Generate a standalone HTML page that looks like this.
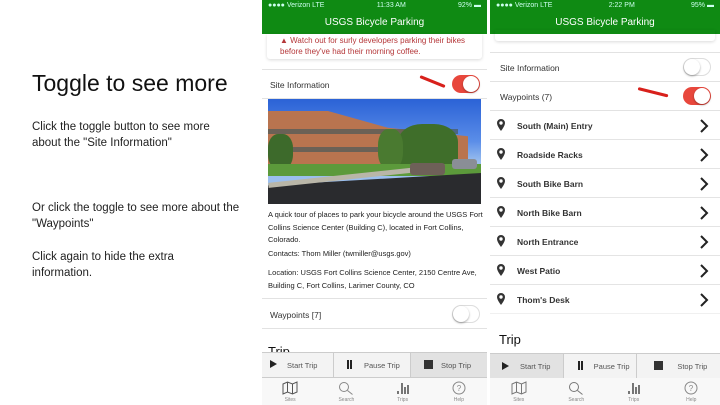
<!DOCTYPE html>
<html><head><style>
*{margin:0;padding:0;box-sizing:border-box}
body{width:720px;height:405px;background:#fff;position:relative;overflow:hidden;font-family:"Liberation Sans",sans-serif;color:#222}
.a{position:absolute}
.hdr{background:#0f8a13;color:#fff;height:34px}
.hdr .st{font-size:7px;color:#cfe;position:absolute;top:2px;left:6px;right:6px;display:flex;justify-content:space-between}
.hdr .t{position:absolute;top:17px;width:100%;text-align:center;font-size:10px}
.sep{position:absolute;height:1px;background:#e2e2e2}
.tg{position:absolute;width:28px;height:18px;border-radius:9px}
.tg.on{background:#e8473c}
.tg.off{background:#fff;border:1px solid #ddd}
.tg i{position:absolute;top:1px;width:16px;height:16px;border-radius:50%;background:#fff;box-shadow:0 1px 2px rgba(0,0,0,.35)}
.tg.on i{right:1px}.tg.off i{left:0;top:0}
.lbl{position:absolute;font-size:8.5px;color:#333}
.wp{position:absolute;left:490px;width:230px;height:29px;border-bottom:1px solid #e4e4e4;font-size:8.5px;font-weight:bold;color:#333}
.wp span{position:absolute;left:27px;top:10px}
.wp svg{position:absolute}
.btns{position:absolute;height:26px;display:flex;background:#f3f3f3;border-top:1px solid #ccc;border-bottom:1px solid #ccc}
.btns div{flex:1;border-right:1px solid #ccc;font-size:7.5px;color:#555;position:relative;padding:8px 0 0 30px}
.tabs{position:absolute;height:27px;background:#f8f8f8;display:flex}
.tabs div{flex:1;text-align:center;font-size:5px;color:#888;padding-top:3px}
.tabs svg{display:block;margin:0 auto 2px}
.arrow{position:absolute;height:3px;background:#d8201b;transform-origin:left center;border-radius:2px}
</style></head><body>

<div class="a" style="left:32px;top:70px;font-size:23px;color:#111">Toggle to see more</div>
<div class="a" style="left:32px;top:119px;font-size:11.5px;line-height:16px;color:#222;width:200px">Click the toggle button to see more about the "Site Information"</div>
<div class="a" style="left:32px;top:200px;font-size:11.5px;line-height:16px;color:#222;width:210px">Or click the toggle to see more about the "Waypoints"</div>
<div class="a" style="left:32px;top:249px;font-size:11.5px;line-height:16px;color:#222;width:200px">Click again to hide the extra information.</div>

<!-- LEFT PHONE -->
<div class="a hdr" style="left:262px;top:0;width:225px"><div class="st"><span>●●●● Verizon LTE</span><span>11:33 AM</span><span>92% ▬</span></div><div class="t">USGS Bicycle Parking</div></div>
<div class="a" style="left:267px;top:34px;width:215px;height:25px;border-radius:0 0 3px 3px;box-shadow:0 1px 3px rgba(0,0,0,.15);font-size:8px;color:#b5383a;padding:1px 0 0 13px;line-height:11px">▲ Watch out for surly developers parking their bikes before they've had their morning coffee.</div>
<div class="sep" style="left:262px;top:69px;width:225px"></div>
<div class="lbl" style="left:270px;top:80px">Site Information</div>
<div class="tg on" style="left:452px;top:75px"><i></i></div>
<div class="arrow" style="left:420px;top:75px;width:27px;transform:rotate(22deg)"></div>
<div class="sep" style="left:262px;top:98px;width:225px"></div>
<div class="a" style="left:268px;top:99px;width:213px;height:105px;overflow:hidden;background:linear-gradient(#2b62d6,#5a8de8 40%,#9bbfee 60%)">
 <div class="a" style="left:0;top:12px;width:200px;height:56px;background:#b9744f;clip-path:polygon(0 0,30% 0,60% 30%,100% 45%,100% 100%,0 100%)"></div>
 <div class="a" style="left:0;top:30px;width:190px;height:5px;background:#4a5a5a;opacity:.7"></div>
 <div class="a" style="left:0;top:48px;width:170px;height:5px;background:#4a5a5a;opacity:.7"></div>
 <div class="a" style="left:130px;top:25px;width:60px;height:45px;background:#3f6e2a;border-radius:40% 40% 10% 10%"></div>
 <div class="a" style="left:0;top:35px;width:25px;height:35px;background:#3d6a2b;border-radius:40%"></div>
 <div class="a" style="left:110px;top:30px;width:25px;height:40px;background:#4a7a30;border-radius:40%"></div>
 <div class="a" style="left:0;top:65px;width:213px;height:12px;background:#5c9a3b"></div>
 <div class="a" style="left:0;top:74px;width:213px;height:31px;background:#2a2b2e;clip-path:polygon(0 40%,100% 0,100% 100%,0 100%)"></div>
 <div class="a" style="left:0;top:76px;width:150px;height:5px;background:#b9b6a8;transform:rotate(-6deg)"></div>
 <div class="a" style="left:142px;top:64px;width:35px;height:12px;background:#6e6058;border-radius:3px"></div>
 <div class="a" style="left:184px;top:60px;width:25px;height:10px;background:#8a8e96;border-radius:3px"></div>
</div>
<div class="a" style="left:268px;top:209px;width:216px;font-size:7.5px;line-height:12.5px;color:#222">A quick tour of places to park your bicycle around the USGS Fort Collins Science Center (Building C), located in Fort Collins, Colorado.</div>
<div class="a" style="left:268px;top:249px;font-size:7.5px;color:#222">Contacts: Thom Miller (twmiller@usgs.gov)</div>
<div class="a" style="left:268px;top:267px;width:216px;font-size:7.5px;line-height:12.5px;color:#222">Location: USGS Fort Collins Science Center, 2150 Centre Ave, Building C, Fort Collins, Larimer County, CO</div>
<div class="sep" style="left:262px;top:298px;width:225px"></div>
<div class="lbl" style="left:270px;top:310px">Waypoints [7]</div>
<div class="tg off" style="left:452px;top:305px"><i></i></div>
<div class="sep" style="left:262px;top:328px;width:225px"></div>
<div class="a" style="left:268px;top:344px;font-size:13px;color:#111">Trip</div>
<div class="btns" style="left:262px;top:352px;width:225px"><div style="padding-left:25px">Start Trip</div><div>Pause Trip</div><div style="background:#e2e2e2;border-right:0">Stop Trip</div></div>
<div class="a" style="left:270px;top:360px;width:0;height:0;border-left:7px solid #222;border-top:4.5px solid transparent;border-bottom:4.5px solid transparent"></div>
<div class="a" style="left:347px;top:360px;width:2px;height:9px;background:#222;box-shadow:3px 0 #222"></div>
<div class="a" style="left:424px;top:360px;width:9px;height:9px;background:#333"></div>
<div class="tabs" style="left:262px;top:378px;width:225px">
<div><svg width="16" height="14"><path d="M1 3l4.5-2 5 2 4.5-2v10l-4.5 2-5-2-4.5 2z M5.5 1v10 M10.5 3v10" stroke="#555" fill="none"/></svg>Sites</div>
<div><svg width="16" height="14"><circle cx="6" cy="6" r="4.5" stroke="#888" fill="none"/><path d="M9.5 9.5l5 4" stroke="#888"/></svg>Search</div>
<div><svg width="16" height="14"><path d="M3 13v-3M7 13V2M10 13V6M13 13V4" stroke="#555" stroke-width="1.6"/></svg>Trips</div>
<div><svg width="16" height="14"><circle cx="8" cy="7" r="6" stroke="#888" fill="none"/><text x="8" y="10" font-size="8" text-anchor="middle" fill="#888" font-family="Liberation Sans">?</text></svg>Help</div></div>

<!-- RIGHT PHONE -->
<div class="a hdr" style="left:490px;top:0;width:230px"><div class="st"><span>●●●● Verizon LTE</span><span>2:22 PM</span><span>95% ▬</span></div><div class="t">USGS Bicycle Parking</div></div>
<div class="a" style="left:495px;top:30px;width:220px;height:11px;border-radius:0 0 3px 3px;box-shadow:0 1px 3px rgba(0,0,0,.15)"></div>
<div class="sep" style="left:490px;top:52px;width:230px"></div>
<div class="lbl" style="left:500px;top:63px">Site Information</div>
<div class="tg off" style="left:683px;top:58px"><i></i></div>
<div class="sep" style="left:490px;top:81px;width:230px"></div>
<div class="lbl" style="left:500px;top:92px">Waypoints (7)</div>
<div class="tg on" style="left:683px;top:87px"><i></i></div>
<div class="arrow" style="left:638px;top:87px;width:31px;transform:rotate(14deg)"></div>
<div class="sep" style="left:490px;top:110px;width:230px"></div>

<div class="wp" style="top:111px"><svg style="left:7px;top:8px" width="8" height="12" viewBox="0 0 8 12"><path d="M4 0a4 4 0 0 0-4 4c0 3 4 8 4 8s4-5 4-8a4 4 0 0 0-4-4zm0 2.3a1.7 1.7 0 1 1 0 3.4 1.7 1.7 0 0 1 0-3.4z" fill="#333"/></svg><span>South (Main) Entry</span><svg style="left:209px;top:7px" width="10" height="16"><path d="M2 2l6 6-6 6" stroke="#222" stroke-width="2" fill="none"/></svg></div>
<div class="wp" style="top:140px"><svg style="left:7px;top:8px" width="8" height="12" viewBox="0 0 8 12"><path d="M4 0a4 4 0 0 0-4 4c0 3 4 8 4 8s4-5 4-8a4 4 0 0 0-4-4zm0 2.3a1.7 1.7 0 1 1 0 3.4 1.7 1.7 0 0 1 0-3.4z" fill="#333"/></svg><span>Roadside Racks</span><svg style="left:209px;top:7px" width="10" height="16"><path d="M2 2l6 6-6 6" stroke="#222" stroke-width="2" fill="none"/></svg></div>
<div class="wp" style="top:169px"><svg style="left:7px;top:8px" width="8" height="12" viewBox="0 0 8 12"><path d="M4 0a4 4 0 0 0-4 4c0 3 4 8 4 8s4-5 4-8a4 4 0 0 0-4-4zm0 2.3a1.7 1.7 0 1 1 0 3.4 1.7 1.7 0 0 1 0-3.4z" fill="#333"/></svg><span>South Bike Barn</span><svg style="left:209px;top:7px" width="10" height="16"><path d="M2 2l6 6-6 6" stroke="#222" stroke-width="2" fill="none"/></svg></div>
<div class="wp" style="top:198px"><svg style="left:7px;top:8px" width="8" height="12" viewBox="0 0 8 12"><path d="M4 0a4 4 0 0 0-4 4c0 3 4 8 4 8s4-5 4-8a4 4 0 0 0-4-4zm0 2.3a1.7 1.7 0 1 1 0 3.4 1.7 1.7 0 0 1 0-3.4z" fill="#333"/></svg><span>North Bike Barn</span><svg style="left:209px;top:7px" width="10" height="16"><path d="M2 2l6 6-6 6" stroke="#222" stroke-width="2" fill="none"/></svg></div>
<div class="wp" style="top:227px"><svg style="left:7px;top:8px" width="8" height="12" viewBox="0 0 8 12"><path d="M4 0a4 4 0 0 0-4 4c0 3 4 8 4 8s4-5 4-8a4 4 0 0 0-4-4zm0 2.3a1.7 1.7 0 1 1 0 3.4 1.7 1.7 0 0 1 0-3.4z" fill="#333"/></svg><span>North Entrance</span><svg style="left:209px;top:7px" width="10" height="16"><path d="M2 2l6 6-6 6" stroke="#222" stroke-width="2" fill="none"/></svg></div>
<div class="wp" style="top:256px"><svg style="left:7px;top:8px" width="8" height="12" viewBox="0 0 8 12"><path d="M4 0a4 4 0 0 0-4 4c0 3 4 8 4 8s4-5 4-8a4 4 0 0 0-4-4zm0 2.3a1.7 1.7 0 1 1 0 3.4 1.7 1.7 0 0 1 0-3.4z" fill="#333"/></svg><span>West Patio</span><svg style="left:209px;top:7px" width="10" height="16"><path d="M2 2l6 6-6 6" stroke="#222" stroke-width="2" fill="none"/></svg></div>
<div class="wp" style="top:285px;border-bottom-color:#f0f0f0"><svg style="left:7px;top:8px" width="8" height="12" viewBox="0 0 8 12"><path d="M4 0a4 4 0 0 0-4 4c0 3 4 8 4 8s4-5 4-8a4 4 0 0 0-4-4zm0 2.3a1.7 1.7 0 1 1 0 3.4 1.7 1.7 0 0 1 0-3.4z" fill="#333"/></svg><span>Thom's Desk</span><svg style="left:209px;top:7px" width="10" height="16"><path d="M2 2l6 6-6 6" stroke="#222" stroke-width="2" fill="none"/></svg></div>

<div class="a" style="left:499px;top:332px;font-size:13px;color:#111">Trip</div>
<div class="btns" style="left:490px;top:353px;width:230px"><div style="background:#e2e2e2;padding-left:30px">Start Trip</div><div>Pause Trip</div><div style="border-right:0;padding-left:40px">Stop Trip</div></div>
<div class="a" style="left:502px;top:362px;width:0;height:0;border-left:7px solid #222;border-top:4.5px solid transparent;border-bottom:4.5px solid transparent"></div>
<div class="a" style="left:578px;top:361px;width:2px;height:9px;background:#222;box-shadow:3px 0 #222"></div>
<div class="a" style="left:654px;top:361px;width:9px;height:9px;background:#333"></div>
<div class="tabs" style="left:490px;top:378px;width:230px">
<div><svg width="16" height="14"><path d="M1 3l4.5-2 5 2 4.5-2v10l-4.5 2-5-2-4.5 2z M5.5 1v10 M10.5 3v10" stroke="#777" fill="none"/></svg>Sites</div>
<div><svg width="16" height="14"><circle cx="6" cy="6" r="4.5" stroke="#777" fill="none"/><path d="M9.5 9.5l5 4" stroke="#777"/></svg>Search</div>
<div><svg width="16" height="14"><path d="M3 13v-3M7 13V2M10 13V6M13 13V4" stroke="#555" stroke-width="1.6"/></svg>Trips</div>
<div><svg width="16" height="14"><circle cx="8" cy="7" r="6" stroke="#888" fill="none"/><text x="8" y="10" font-size="8" text-anchor="middle" fill="#888" font-family="Liberation Sans">?</text></svg>Help</div></div>
</body></html>
